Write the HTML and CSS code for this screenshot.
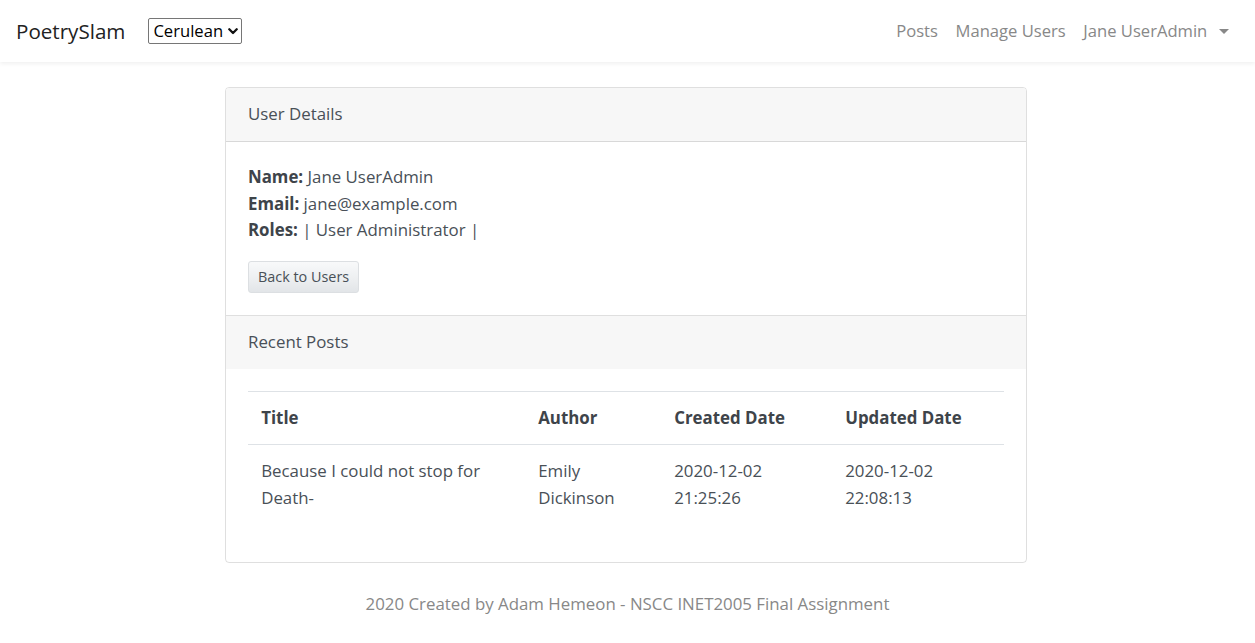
FILE: index.html
```html
<!DOCTYPE html>
<html lang="en">
<head>
<meta charset="utf-8">
<title>PoetrySlam - User Details</title>
<link rel="stylesheet" href="styles.css">
</head>
<body>
<nav class="navbar">
  <div class="nav-left">
    <a class="brand" href="#">PoetrySlam</a>
    <div class="theme-select">
      <span>Cerulean</span>
      <svg class="chev" width="10" height="7" viewBox="0 0 10 7"><path d="M1.3 1.3 L5 5 L8.7 1.3" fill="none" stroke="#111" stroke-width="2.3" stroke-linecap="round" stroke-linejoin="round"/></svg>
    </div>
  </div>
  <ul class="nav-links">
    <li><a href="#">Posts</a></li>
    <li><a href="#">Manage Users</a></li>
    <li><a href="#" class="dropdown">Jane UserAdmin <span class="caret"></span></a></li>
  </ul>
</nav>

<main class="main">
  <div class="card">
    <div class="card-header">User Details</div>
    <div class="card-body">
      <p class="details">
        <strong>Name:</strong> Jane UserAdmin<br>
        <strong>Email:</strong> jane@example.com<br>
        <strong>Roles:</strong> | User Administrator |
      </p>
      <a class="btn" href="#">Back to Users</a>
    </div>
    <div class="card-header plain">Recent Posts</div>
    <div class="card-body">
      <table class="table">
        <thead>
          <tr>
            <th class="c1">Title</th>
            <th class="c2">Author</th>
            <th class="c3">Created Date</th>
            <th class="c4">Updated Date</th>
          </tr>
        </thead>
        <tbody>
          <tr>
            <td>Because I could not stop for Death-</td>
            <td>Emily Dickinson</td>
            <td>2020-12-02 21:25:26</td>
            <td>2020-12-02 22:08:13</td>
          </tr>
        </tbody>
      </table>
    </div>
  </div>
</main>

<footer class="footer">2020 Created by Adam Hemeon - NSCC INET2005 Final Assignment</footer>
</body>
</html>
```
FILE: styles.css
```css
* { box-sizing: border-box; }
html, body { margin: 0; padding: 0; }
body {
  font-family: "Open Sans", "Noto Sans", sans-serif;
  font-size: 16.85px;
  line-height: 26.4px;
  color: #495057;
  background: #fff;
}
a { text-decoration: none; }

.navbar {
  height: 61.6px;
  padding: 0 17.6px 0 16px;
  display: flex;
  align-items: center;
  justify-content: space-between;
  background: #fff;
  box-shadow: 0 2px 4px rgba(0,0,0,0.06);
  position: relative;
}
.nav-left { display: flex; align-items: center; }
.brand {
  font-size: 20.6px;
  color: #222;
  margin-right: 23px;
}
.theme-select {
  height: 26px;
  width: 94px;
  border: 1px solid #767676;
  border-radius: 2px;
  display: flex;
  align-items: center;
  padding: 0 3px 0 4px;
  color: #000;
  font-size: 16.6px;
  justify-content: space-between;
}
.theme-select .chev { margin-top: 1px; }
.nav-links {
  list-style: none;
  margin: 0;
  padding: 0;
  display: flex;
  align-items: center;
}
.nav-links a {
  display: block;
  padding: 8.8px 8.8px;
  color: #888;
  font-size: 16.6px;
}
.caret {
  display: inline-block;
  width: 0; height: 0;
  margin-left: 7px;
  vertical-align: 3px;
  border-top: 5px solid #888;
  border-left: 5px solid transparent;
  border-right: 5px solid transparent;
}

.main {
  display: flex;
  justify-content: center;
  padding: 25px 3px 0 0;
}
.card {
  width: 802px;
  border: 1px solid rgba(0,0,0,0.125);
  border-radius: 4px;
  overflow: hidden;
}
.card-header {
  background: #f7f7f7;
  padding: 13.6px 22px 13.2px;
  height: 54.8px;
  border-bottom: 1px solid rgba(0,0,0,0.125);
  color: #495057;
}
.card-header.plain { border-bottom: none; height: 53.8px; padding-top: 13.6px; }
.card-body {
  padding: 22px;
  border-bottom: 1px solid rgba(0,0,0,0.125);
}
.card-body:last-child { border-bottom: none; }
.details { margin: 0 0 17px; }
.details strong { color: #3e444a; font-weight: 700; }

.btn {
  display: inline-block;
  height: 32px;
  padding: 2px 9px;
  font-size: 14.4px;
  line-height: 26px;
  color: #495057;
  border: 1px solid #dcdfe2;
  border-radius: 3px;
  background: linear-gradient(#f8f9fa 0%, #eceef0 60%, #e2e5e8 100%);
}

.table {
  width: 100%;
  border-collapse: collapse;
  margin-bottom: 16px;
}
.table th, .table td {
  text-align: left;
  vertical-align: top;
  padding: 12.8px 13.2px;
  border-top: 1px solid #dee2e6;
}
.table th { font-weight: 700; color: #3e444a; border-bottom: 1px solid #dee2e6; }
.table .c1 { width: 277px; }
.table .c2 { width: 136px; }
.table .c3 { width: 171px; }
.table .c4 { width: 172px; }

.footer {
  text-align: center;
  color: #888;
  padding-top: 28px;
}
```
